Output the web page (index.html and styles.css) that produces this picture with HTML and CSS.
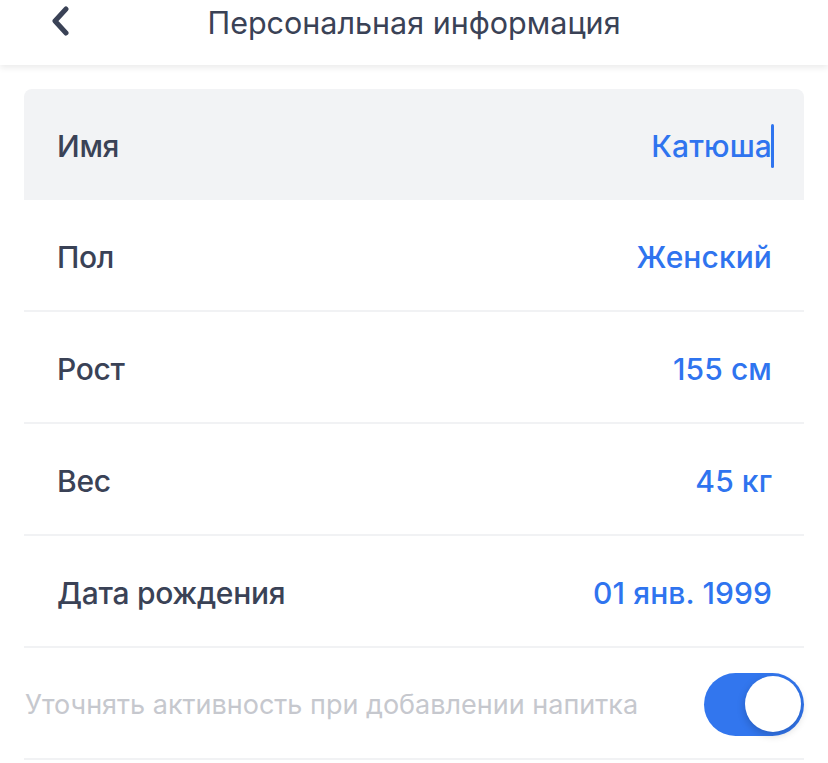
FILE: index.html
```html
<!DOCTYPE html>
<html lang="ru">
<head>
<meta charset="utf-8">
<link rel="stylesheet" href="styles.css">
</head>
<body>
<header class="topbar">
  <span class="back">
    <svg width="22" height="30" viewBox="0 0 22 30"><path d="M16 3 L5 15 L16 27" fill="none" stroke="#3a4256" stroke-width="5" stroke-linecap="round" stroke-linejoin="round"/></svg>
  </span>
  <h1 class="title">Персональная информация</h1>
</header>
<main class="list">
  <div class="row active">
    <span class="label">Имя</span>
    <span class="value">Катюша<span class="caret"></span></span>
  </div>
  <div class="row">
    <span class="label">Пол</span>
    <span class="value">Женский</span>
  </div>
  <div class="row">
    <span class="label">Рост</span>
    <span class="value">155 см</span>
  </div>
  <div class="row">
    <span class="label">Вес</span>
    <span class="value">45 кг</span>
  </div>
  <div class="row">
    <span class="label">Дата рождения</span>
    <span class="value">01 янв. 1999</span>
  </div>
  <div class="row toggle-row">
    <span class="hint">Уточнять активность при добавлении напитка</span>
    <span class="switch"><span class="knob"></span></span>
  </div>
</main>
</body>
</html>
```
FILE: styles.css
```css
* { box-sizing: border-box; }
html, body { margin: 0; padding: 0; background: #fff; }
body { font-family: Inter, "Noto Sans", sans-serif; width: 828px; height: 763px; overflow: hidden; }
.topbar {
  height: 65px;
  display: flex;
  align-items: center;
  justify-content: center;
  position: relative;
  box-shadow: 0 3px 6px rgba(0,0,0,0.08);
  background: #fff;
}
.back { position: absolute; left: 50px; top: 6px; }
.title {
  margin: 0;
  margin-top: -21px;
  font-size: 30.5px;
  font-weight: 400;
  color: #3a4256;
  letter-spacing: 0;
}
.list { padding: 24px 24px 0 24px; }
.row {
  height: 112px;
  display: flex;
  align-items: center;
  justify-content: space-between;
  padding: 4px 32px 0 33px;
  border-bottom: 2px solid #f1f2f4;
}
.row.active { background: #f2f3f5; border-radius: 8px 8px 0 0; border-bottom-color: transparent; height: 111px; }
.label { font-size: 30px; font-weight: 500; color: #3a4256; letter-spacing: -0.3px; }
.value { font-size: 30px; font-weight: 500; color: #2f74ef; letter-spacing: 0.1px; position: relative; }
.caret { position: absolute; right: -2px; top: -4px; width: 3px; height: 44px; background: #2f74ef; border-radius: 2px; }
.toggle-row { padding: 2px 0 0 1px; height: 112px; }
.hint { font-size: 27px; color: #c6c8ce; letter-spacing: 0; }
.switch {
  width: 100px; height: 63px; border-radius: 32px;
  background: #3276ee;
  display: flex; align-items: center; justify-content: flex-end;
  padding-right: 3px;
}
.knob {
  width: 56px; height: 56px; border-radius: 50%; background: #fff;
  box-shadow: 0 3px 8px rgba(0,0,0,0.2);
}
```
